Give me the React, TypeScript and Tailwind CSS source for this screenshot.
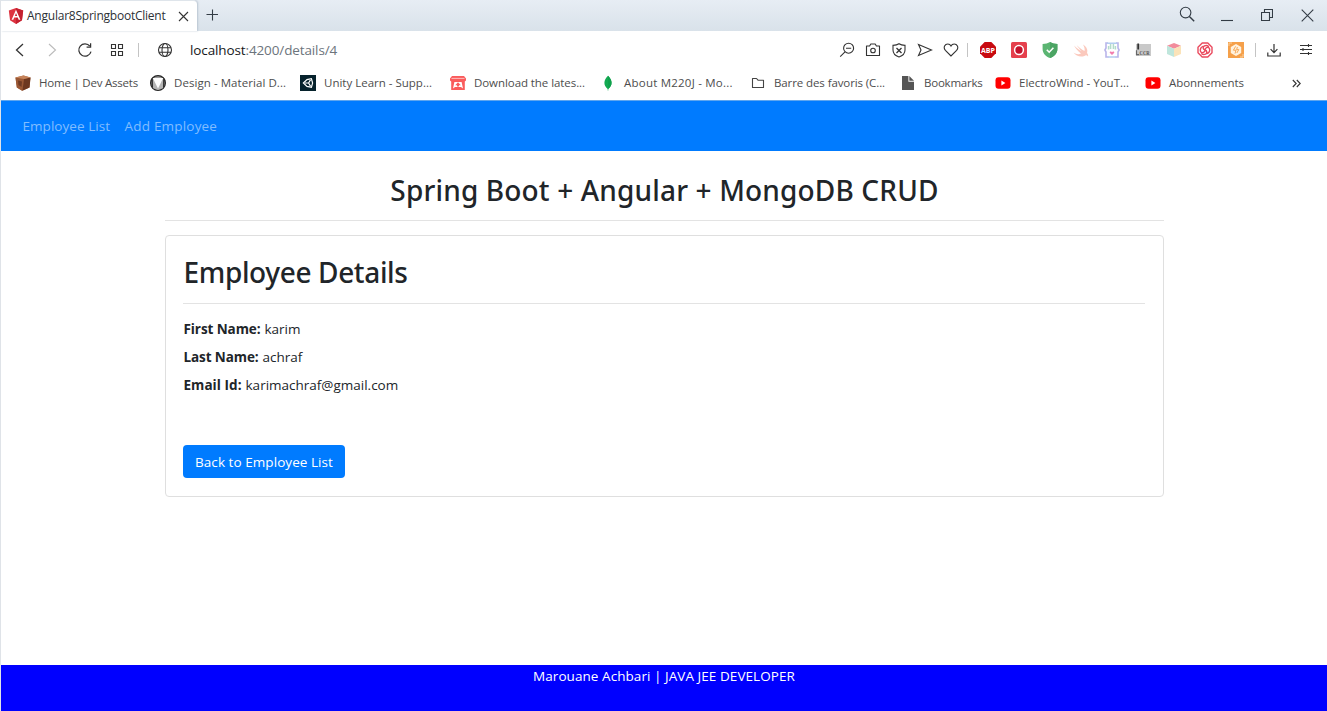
import React from "react";
import type { ReactNode } from "react";

type IconProps = { className?: string; children: ReactNode; box?: string };

function Line({ className = "", children, box = "0 0 16 16" }: IconProps) {
  return (
    <svg viewBox={box} className={`shrink-0 fill-none stroke-current ${className}`} strokeWidth="1.1">
      {children}
    </svg>
  );
}

function AngularLogo() {
  return (
    <svg viewBox="0 0 16 16" className="size-4 shrink-0">
      <path d="M8 0 15.2 2.6 14 12.2 8 16 2 12.2.8 2.6Z" fill="#dd3340" />
      <path d="M8 0 15.2 2.6 14 12.2 8 16Z" fill="#c3202f" />
      <path d="M8 1.8 3.6 11.8H5.3L6.2 9.5H9.8L10.7 11.8H12.4ZM8 5.1 9.2 8H6.8Z" fill="#fff" fillRule="evenodd" />
    </svg>
  );
}

function TabStrip() {
  return (
    <div className="flex h-[31px] bg-gradient-to-b from-[#e7edf4] to-[#d9e2ea]">
      <div className="flex w-[196px] items-center rounded-tr-sm border-t border-[#dfe5eb] bg-white pl-[7px] shadow-[1px_0_2px_#b9c5d1]">
        <AngularLogo />
        <span className="ml-[3px] w-[139px] text-[12px] leading-4 tracking-[-0.23px] whitespace-nowrap text-[#2d3136]">
          Angular8SpringbootClient
        </span>
        <Line className="ml-[12px] size-[11px] text-[#333]" box="0 0 11 11">
          <path d="M1 1 10 10M10 1 1 10" />
        </Line>
      </div>
      <Line className="mt-[9px] ml-[9px] size-[12px] text-[#333c45]" box="0 0 12 12">
        <path d="M6.5 .5V11.5M.5 5.5H12" />
      </Line>
      <div className="ml-auto flex pr-[13px] text-[#333c45]">
        <Line className="mt-[6px] size-4">
          <circle cx="6.6" cy="6.6" r="5.3" />
          <path d="M10.4 10.4 15.2 15.2" strokeWidth="1.4" />
        </Line>
        <Line className="mt-[14px] ml-[26px] h-[8px] w-[12px]" box="0 0 12 8">
          <path d="M0 6.5H12" />
        </Line>
        <Line className="mt-[9px] ml-[28px] size-[12px]" box="0 0 12 12">
          <path d="M.5 3.5H8.5V11.5H.5ZM3.5 3.5V.5H11.5V8.5H8.5" />
        </Line>
        <Line className="mt-[9px] ml-[28px] size-[13px]" box="0 0 13 13">
          <path d="M.7.7 12.3 12.3M12.3.7.7 12.3" />
        </Line>
      </div>
    </div>
  );
}

function Extensions() {
  return (
    <div className="flex items-center gap-[15px]">
      <svg viewBox="0 0 16 16" className="size-4">
        <path d="M4.7 0H11.3L16 4.7V11.3L11.3 16H4.7L0 11.3V4.7Z" fill="#c80a10" />
        <text x="8" y="10.8" textAnchor="middle" fontSize="7.6" fontWeight="700" fill="#fff" textLength="14" lengthAdjust="spacingAndGlyphs">ABP</text>
      </svg>
      <svg viewBox="0 0 16 16" className="size-4">
        <rect width="16" height="16" rx="1.5" fill="#e5404d" />
        <circle cx="8" cy="8" r="4.4" fill="#c4122c" stroke="#fff" strokeWidth="1.5" />
      </svg>
      <svg viewBox="0 0 16 16" className="size-4">
        <path d="M8 0C10 1.3 12.5 1.8 15.4 1.9V7C15.4 11.5 12 14.7 8 16 4 14.7.6 11.5.6 7V1.9C3.5 1.8 6 1.3 8 0Z" fill="#5bb572" />
        <path d="M8 0C10 1.3 12.5 1.8 15.4 1.9V7C15.4 11.5 12 14.7 8 16Z" fill="#4ba463" />
        <path d="M4.8 7.8 7.2 10.2 11.4 5.8" fill="none" stroke="#fff" strokeWidth="1.6" />
      </svg>
      <svg viewBox="0 0 16 16" className="size-4">
        <path d="M1 3.5C4 6.4 6.5 8 8.6 9.2 6.5 7 5 5 3.8 3.2 7 6 9 7.5 11.5 9 12 7 11.3 4.5 10 2.4 14 5 15 8 14 11 15.3 12.6 15.3 13.8 15 14.5 13.8 13 12.6 13.2 11.4 13.9 7.5 15.4 3 14 .5 10.6 3.3 12.4 5.8 12.5 8 11.6 5 9.3 2.7 6.5 1 3.5Z" fill="#fbc9bd" />
      </svg>
      <svg viewBox="0 0 16 16" className="size-4 fill-none" strokeWidth="1.6">
        <path d="M4 1H2V6L.9 8 2 10V15H4.5" stroke="#b9b5ea" />
        <path d="M12 1H14V6L15.1 8 14 10V15H11.5" stroke="#b9b5ea" />
        <path d="M3 1.2H13M4 15H12" stroke="#b3cdf0" />
        <path d="M6.6 2V7M9.4 2V7M4.6 4V7.4M11.4 4V7.4" stroke="#b4dccb" strokeWidth="1.5" />
        <path d="M8 13 5.7 10.8C5.6 9.2 7.4 9.2 8 10.1 8.6 9.2 10.4 9.2 10.3 10.8Z" fill="#f27fae" />
      </svg>
      <svg viewBox="0 0 16 16" className="size-4 overflow-visible">
        <rect x="1" y="2" width="15" height="12" fill="#c9c9c9" />
        <path d="M3.2 1.5V7.5" fill="none" stroke="#333" strokeWidth="1.8" />
        <path d="M1.5 8.2V12.6H4.2" fill="none" stroke="#666" strokeWidth="1.2" />
        <text x="4.6" y="12.6" fontSize="6" fontWeight="700" fill="#555" textLength="10" lengthAdjust="spacingAndGlyphs" className="font-['Liberation_Serif']">CCR</text>
      </svg>
      <svg viewBox="0 0 16 16" className="size-4">
        <path d="M8 1 15 3.8 8 6.8 1 3.8Z" fill="#f28c9c" />
        <path d="M1 3.8 8 6.8V15L1 12Z" fill="#bfe6dc" />
        <path d="M15 3.8 8 6.8V15L15 12Z" fill="#fbe3b9" />
      </svg>
      <svg viewBox="0 0 16 16" className="size-4 fill-none stroke-[#ea4a5e]" strokeWidth="1.4" strokeLinecap="round">
        <path d="M5.2 1H10.8L15 5.2V10.8L10.8 15H5.2L1 10.8V5.2Z" strokeLinejoin="round" />
        <path d="M8 8C8 5.6 10.6 4.6 12.4 6.2 13.4 8.6 12 11 10 11.6M8 8C8 10.4 5.4 11.4 3.6 9.8 2.6 7.4 4 5 6 4.4M8 8C5.8 7.6 5.6 5 7.4 3.8 9 3.2 10.4 3.4 11.4 4.2M8 8C10.2 8.4 10.4 11 8.6 12.2 7 12.8 5.6 12.6 4.6 11.8" />
      </svg>
      <svg viewBox="0 0 16 16" className="size-4">
        <rect width="16" height="16" fill="#f5a04a" />
        <path d="M1 4V1H4M12 15H15V12" fill="none" stroke="#fbd09c" />
        <path d="M8 2 13.2 5V11L8 14 2.8 11V5Z" fill="#fff2df" />
        <path d="M7.6 4.4 5.4 8.2H8L7 11.6M9.4 5 8.6 7.6H10.8L8.8 11" fill="none" stroke="#f5a04a" strokeWidth=".9" />
      </svg>
    </div>
  );
}

function AddressBar() {
  return (
    <div className="flex h-[38px] items-center pl-[14px] text-[#333]">
      <Line className="h-[14px] w-[9px]" box="0 0 9 14"><path d="M8 1 1.5 7 8 13" strokeWidth="1.3" /></Line>
      <Line className="ml-[24px] h-[14px] w-[9px] text-[#bbb]" box="0 0 9 14"><path d="M1 1 7.5 7 1 13" /></Line>
      <Line className="ml-[20px] size-4">
        <path d="M12.9 4.2A6.2 6.2 0 1 0 14 9.6" strokeWidth="1.25" />
        <path d="M13.6 1.2V5.2H9.6" strokeWidth="1.25" />
      </Line>
      <Line className="ml-[17px] size-[14px]" box="0 0 14 14">
        <path d="M1.5 1.5H5.5V5.5H1.5ZM8.5 1.5H12.5V5.5H8.5ZM1.5 8.5H5.5V12.5H1.5ZM8.5 8.5H12.5V12.5H8.5Z" />
      </Line>
      <div className="ml-[14px] h-[14px] w-px bg-[#c4c4c4]" />
      <Line className="ml-[18px] size-4">
        <circle cx="8" cy="8" r="6.5" />
        <ellipse cx="8" cy="8" rx="3" ry="6.5" />
        <path d="M2 5.8H14M2 10.2H14" />
      </Line>
      <span className="ml-[17px] w-[148px] text-[13.5px] leading-4 tracking-[-0.12px] whitespace-nowrap text-[#6c747c]">
        <span className="text-[#16181b]">localhost</span>:4200/details/4
      </span>
      <div className="ml-auto flex items-center pr-[13px]">
        <Line className="size-4">
          <circle cx="9.6" cy="6.2" r="5" />
          <path d="M6 9.8 1.2 14.6M7 6.2H12.2" />
        </Line>
        <Line className="ml-[10px] size-4">
          <path d="M1.5 4H4.6L5.8 2H10.2L11.4 4H14.5V13.5H1.5Z" strokeLinejoin="round" />
          <circle cx="8" cy="8.5" r="2.3" />
        </Line>
        <Line className="ml-[10px] size-4">
          <path d="M8 1.8C9.6 3 11.6 3.4 14 3.4V8C14 11.6 11.6 13.8 8 15 4.4 13.8 2 11.6 2 8V3.4C4.4 3.4 6.4 3 8 1.8Z" />
          <path d="M5.5 6 10.5 11M10.5 6 5.5 11" strokeWidth="1.3" />
        </Line>
        <Line className="ml-[10px] size-4">
          <path d="M1.5 2.5 14.5 8 1.5 13.5 4 8Z" />
        </Line>
        <Line className="ml-[10px] size-4">
          <path d="M8 14 2.4 8.4C-.2 5.4 2 2 4.8 2 6.4 2 7.5 3 8 4 8.5 3 9.6 2 11.2 2 14 2 16.2 5.4 13.6 8.4Z" />
        </Line>
        <div className="mr-[12px] ml-[8px] h-[14px] w-px bg-[#c4c4c4]" />
        <Extensions />
        <div className="mr-[10px] ml-[11px] h-[14px] w-px bg-[#c4c4c4]" />
        <Line className="size-4">
          <path d="M8 2V10.5M4.6 7.2 8 10.6 11.4 7.2M1.8 10.5V14H14.2V10.5" strokeWidth="1.2" />
        </Line>
        <Line className="ml-[16px] size-4">
          <path d="M2 3.5H14M2 7.5H14M2 11.5H14M10.5 2V5M5 6V9M10.5 10V13" />
        </Line>
      </div>
    </div>
  );
}

function YouTube() {
  return (
    <svg viewBox="0 0 16 16" className="size-4 shrink-0">
      <rect x=".5" y="2.3" width="15" height="11.4" rx="3" fill="#f00" />
      <path d="M6.4 5.6 10.4 8 6.4 10.4Z" fill="#fff" />
    </svg>
  );
}

function Bookmark({ icon, width, tracking, children }: { icon: ReactNode; width: string; tracking: string; children: ReactNode }) {
  return (
    <div className={`flex shrink-0 items-center gap-2 ${width}`}>
      {icon}
      <span className={`text-[11.5px] leading-4 whitespace-nowrap text-[#4d4d4d] ${tracking}`}>{children}</span>
    </div>
  );
}

function BookmarksBar() {
  return (
    <div className="flex h-[32px] items-center border-b border-[#5fa6ee] pb-[3px] pl-[14px]">
      <Bookmark width="w-[135px]" tracking="tracking-[-0.21px]" icon={
        <svg viewBox="0 0 16 16" className="size-4 shrink-0">
          <path d="M.5 2.5 8.5.5 15.5 2.5 14.5 12.5 7 15.8 1.8 12.5Z" fill="#a9643d" />
          <path d="M.5 2.5 9 4 7.4 15.8 1.8 12.5Z" fill="#9a5734" />
          <path d="M9 4 15.5 2.5 14.5 12.5 7.4 15.8Z" fill="#6d371f" />
          <path d="M3 5.5 7 6.5 6.5 12 3.5 10Z" fill="#6f3b24" />
          <path d="M.5 2.5 8.5.5 15.5 2.5 9 4Z" fill="#c5835a" />
        </svg>}>Home | Dev Assets</Bookmark>
      <Bookmark width="w-[150px]" tracking="tracking-[0.06px]" icon={
        <svg viewBox="0 0 16 16" className="size-4 shrink-0">
          <circle cx="8" cy="8" r="7.4" fill="#9a9a9a" stroke="#262626" strokeWidth="1.2" />
          <path d="M2.6 3H13.4V13L8 15 2.6 13Z" fill="#b5b5b5" />
          <path d="M2.8 3H13.2L8 13.6Z" fill="#fff" />
          <path d="M2.8 3H1.6V12L3 13.4ZM13.2 3H14.4V12L13 13.4Z" fill="#2e2e2e" />
        </svg>}>Design - Material D...</Bookmark>
      <Bookmark width="w-[150px]" tracking="tracking-normal" icon={
        <svg viewBox="0 0 16 16" className="size-4 shrink-0">
          <rect width="16" height="16" fill="#06222c" />
          <path d="M3.4 8 7 4.6 11.4 3.6 12.6 8 11.4 12.4 7 11.4ZM5 8H8.6L10.6 4.6M8.6 8 10.6 11.4" fill="none" stroke="#fff" strokeWidth="1.2" />
        </svg>}>Unity Learn - Supp...</Bookmark>
      <Bookmark width="w-[150px]" tracking="tracking-[-0.07px]" icon={
        <svg viewBox="0 0 16 16" className="size-4 shrink-0">
          <path d="M2 1H14L16 3.6V5.4L14.8 6.6V15H1.2V6.6L0 5.4V3.6Z" fill="#fa5c5c" />
          <path d="M1.5 3.4H14.5" stroke="#fff" strokeWidth=".6" />
          <path d="M4.4 7H11.6L13 13.4 11 12H5L3 13.4Z" fill="#fff" />
          <path d="M8 7.2 10.8 10.2H9V11.6H7V10.2H5.2Z" fill="#fa5c5c" />
        </svg>}>Download the lates...</Bookmark>
      <Bookmark width="w-[150px]" tracking="tracking-[0.22px]" icon={
        <svg viewBox="0 0 16 16" className="size-4 shrink-0">
          <path d="M8 .8C12.8 5.6 12.6 10.5 8.3 14V15.5H7.7V14C3.4 10.5 3.2 5.6 8 .8Z" fill="#13aa52" />
          <path d="M8 .8C12.8 5.6 12.6 10.5 8.3 14Z" fill="#10a04c" />
        </svg>}>About M220J - Mo...</Bookmark>
      <Bookmark width="w-[150px]" tracking="tracking-[-0.1px]" icon={
        <Line className="size-4 text-[#444]">
          <path d="M2.5 3.5H6.5L8 5.2H13.5V12.5H2.5Z" strokeLinejoin="round" />
        </Line>}>Barre des favoris (C...</Bookmark>
      <Bookmark width="w-[95px]" tracking="tracking-[-0.23px]" icon={
        <svg viewBox="0 0 16 16" className="size-4 shrink-0">
          <path d="M2 1H8.4V6.8H14V15H2Z" fill="#555" />
          <path d="M9.3 1 14 5.8H9.3Z" fill="#555" />
        </svg>}>Bookmarks</Bookmark>
      <Bookmark width="w-[150px]" tracking="tracking-normal" icon={<YouTube />}>ElectroWind - YouT...</Bookmark>
      <Bookmark width="w-[100px]" tracking="tracking-[-0.05px]" icon={<YouTube />}>Abonnements</Bookmark>
      <Line className="ml-auto mr-[26px] size-[9px] text-[#333]" box="0 0 9 9">
        <path d="M.8 1 4.2 4.5.8 8M4.8 1 8.2 4.5 4.8 8" />
      </Line>
    </div>
  );
}

function Field({ label, value, tracking }: { label: string; value: string; tracking: string }) {
  return (
    <div className="flex h-7 gap-[4px] pl-px text-[13.5px] leading-[21px] whitespace-nowrap">
      <b className={tracking}>{label}</b>
      <span>{value}</span>
    </div>
  );
}

export default function App() {
  return (
    <div className="flex h-[711px] w-[1327px] flex-col overflow-hidden border-l border-[#dfe3e8] bg-white font-['Open_Sans','Noto_Sans',sans-serif] text-[#212529]">
      <TabStrip />
      <AddressBar />
      <BookmarksBar />
      <nav className="flex h-[50px] items-center gap-[14.5px] bg-[#007bff] pl-[21.5px] text-[13.5px] whitespace-nowrap text-[#80bdff]">
        <a className="tracking-[0.05px]">Employee List</a>
        <a className="tracking-[0.19px]">Add Employee</a>
      </nav>
      <main className="mx-auto w-[999px] grow font-normal">
        <h2 className="mt-[22px] pl-px text-center font-['Noto_Sans'] text-[28px] leading-[34px] font-medium tracking-[0.16px]">
          Spring Boot + Angular + MongoDB CRUD
        </h2>
        <hr className="mt-[13px] border-[#e3e3e3]" />
        <section className="mt-[14px] h-[262px] rounded-[4px] border border-[#dfdfdf] pr-[18px] pl-[17px]">
          <h2 className="mt-[19px] pl-px font-['Noto_Sans'] text-[28px] leading-[34px] font-medium tracking-[-0.36px]">
            Employee Details
          </h2>
          <hr className="mt-[14px] mb-[15px] border-[#e3e3e3]" />
          <Field label="First Name:" value="karim" tracking="tracking-[-0.09px]" />
          <Field label="Last Name:" value="achraf" tracking="tracking-[-0.1px]" />
          <Field label="Email Id:" value="karimachraf@gmail.com" tracking="tracking-[0.05px]" />
          <button className="mt-[42px] block h-[33px] w-[162px] rounded-[4px] bg-[#007bff] pt-[2px] pl-px text-[13.5px] tracking-[0.06px] whitespace-nowrap text-white">
            Back to Employee List
          </button>
        </section>
      </main>
      <footer className="h-[46px] bg-[#0000ff] pt-px text-center text-[13.5px] leading-[21px] tracking-[0.06px] text-white">
        Marouane Achbari | JAVA JEE DEVELOPER
      </footer>
    </div>
  );
}
